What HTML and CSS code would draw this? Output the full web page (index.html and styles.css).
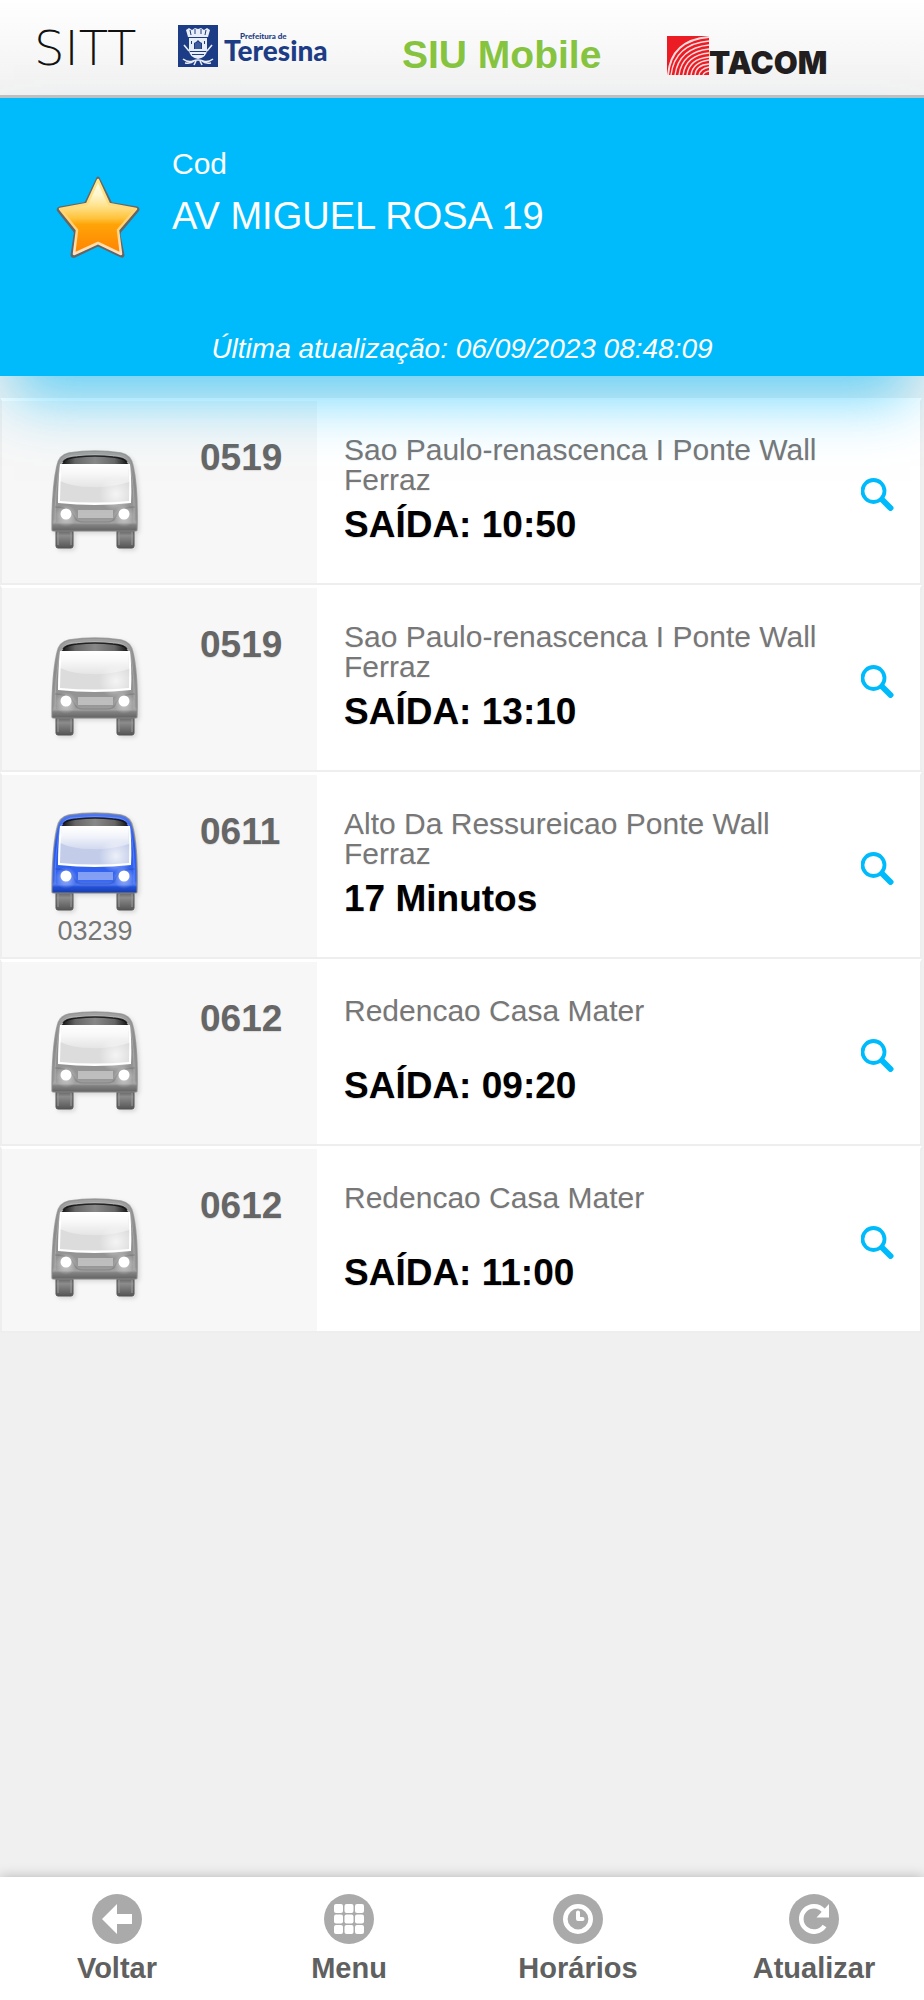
FILE: index.html
```html
<!DOCTYPE html>
<html lang="pt-BR">
<head>
<meta charset="utf-8">
<meta name="viewport" content="width=device-width, initial-scale=1">
<title>SIU Mobile</title>
<link rel="stylesheet" href="styles.css">
</head>
<body>
<svg class="defs" aria-hidden="true">
  <defs>
    <linearGradient id="roof" x1="0" y1="0" x2="1" y2="0">
      <stop offset="0" stop-color="#111"/><stop offset=".2" stop-color="#666"/><stop offset=".5" stop-color="#888"/><stop offset=".8" stop-color="#666"/><stop offset="1" stop-color="#111"/>
    </linearGradient>
    <linearGradient id="shade" x1="0" y1="0" x2="0" y2="1">
      <stop offset="0" stop-color="#fff" stop-opacity=".2"/><stop offset=".4" stop-color="#fff" stop-opacity="0"/>
      <stop offset=".85" stop-color="#fff" stop-opacity=".1"/><stop offset=".9" stop-color="#fff" stop-opacity=".2"/>
      <stop offset=".93" stop-color="#000" stop-opacity=".1"/><stop offset="1" stop-color="#000" stop-opacity=".3"/>
    </linearGradient>
    <linearGradient id="glass" x1="0" y1="0" x2="0" y2="1">
      <stop offset="0" stop-color="#fff"/><stop offset=".4" stop-color="#fff" stop-opacity=".8"/><stop offset="1" stop-color="#fff" stop-opacity=".25"/>
    </linearGradient>
    <radialGradient id="glow">
      <stop offset="0" stop-color="#fff" stop-opacity=".7"/><stop offset="1" stop-color="#fff" stop-opacity="0"/>
    </radialGradient>
    <linearGradient id="tyre" x1="0" y1="0" x2="0" y2="1">
      <stop offset="0" stop-color="#555"/><stop offset=".35" stop-color="#8c8c8c"/><stop offset="1" stop-color="#555"/>
    </linearGradient>
    <linearGradient id="gold" x1="0" y1="0" x2="0" y2="1">
      <stop offset="0" stop-color="#fffdf0"/><stop offset=".2" stop-color="#fff6cc"/><stop offset=".35" stop-color="#ffe28c"/>
      <stop offset=".52" stop-color="#ffc23a"/><stop offset=".6" stop-color="#ffa408"/><stop offset="1" stop-color="#ff8200"/>
    </linearGradient>
    <linearGradient id="rim" x1="0" y1="0" x2="0" y2="1">
      <stop offset="0" stop-color="#ffe98c"/><stop offset=".6" stop-color="#ffd070"/><stop offset="1" stop-color="#ffe2c4"/>
    </linearGradient>
    <symbol id="bus" viewBox="0 0 88 100">
      <g fill="url(#tyre)" stroke="#555" stroke-width="1">
        <rect x="5" y="79" width="17" height="19" rx="2"/><rect x="66" y="79" width="17" height="19" rx="2"/>
      </g>
      <path d="M7 82v13M20 82v13M68 82v13M81 82v13" stroke="#999" stroke-width="1"/>
      <path class="bus-body" d="M1 80Q1 38 6 16Q8 5 18 3Q44-1 70 3Q80 5 82 16Q87 38 86 80Q86 81 84 81H3Q1 81 1 80Z"/>
      <path fill="url(#shade)" stroke="#888" stroke-opacity=".7" stroke-width="1.500" d="M1 80Q1 38 6 16Q8 5 18 3Q44-1 70 3Q80 5 82 16Q87 38 86 80Q86 81 84 81H3Q1 81 1 80Z"/>
      <path d="M4 72Q4 38 9 17Q11 8 20 6Q44 3 68 6Q77 8 79 17Q84 38 83 72" fill="none" stroke="#fff" stroke-opacity=".2" stroke-width="1"/>
      <path fill="url(#roof)" d="M11 14Q13 8 26 7Q44 5 62 7Q75 8 77 14Z"/>
      <path fill="none" stroke="#000" stroke-opacity=".75" stroke-width="1.500" d="M12 12Q14 8 26 7Q44 5 62 7Q74 8 76 12"/>
      <path fill="#fff" d="M9 14H79Q81 32 80 53Q44 57 7 53Q7 32 9 14Z"/>
      <path class="bus-glass" d="M11 15H77Q79 33 78 51Q44 54 9 51Q9 33 11 15Z"/>
      <path fill="url(#glass)" d="M11 15H77L78 32Q60 38 40 37Q22 37 9 31Z"/>
      <circle cx="65" cy="44" r="17" fill="url(#glow)"/>
      <path d="M4 57Q20 57 24 68Q26 72 32 72H56Q62 72 64 68Q68 57 84 57" fill="none" stroke="#000" stroke-opacity=".12" stroke-width="1.500"/>
      <circle cx="15" cy="66" r="11" fill="url(#glow)" opacity=".8"/><circle cx="73" cy="66" r="11" fill="url(#glow)" opacity=".8"/>
      <circle cx="15" cy="64" r="5.500" fill="#fff"/><circle cx="73" cy="64" r="5.500" fill="#fff"/>
      <rect x="27" y="60" width="35" height="8" fill="#fff" fill-opacity=".38"/>
    </symbol>
    <symbol id="search" viewBox="0 0 33 33">
      <circle cx="12.500" cy="13" r="11" fill="none" stroke="currentColor" stroke-width="3.800"/>
      <path d="M21 21.500L29.500 30" fill="none" stroke="currentColor" stroke-width="6" stroke-linecap="round"/>
    </symbol>
  </defs>
</svg>

<header class="topbar">
  <span class="sitt">SITT</span>
  <div class="city">
    <svg class="crest" viewBox="0 0 40 42" aria-hidden="true">
      <rect width="40" height="42" fill="#1d3c86"/>
      <path fill="#e9edf5" d="M8 5l3-2 3 2 3-2 3 1 3-1 3 2 3-2 3 2-2 7H10z"/>
      <path d="M12 5l1 5M17 4v5M23 4v5M28 5l-1 5" stroke="#1d3c86"/>
      <path fill="#e9edf5" d="M11 13h18v12q0 7-9 9q-9-2-9-9z"/>
      <path fill="#1d3c86" d="M16 24v-6l2-1 2-2 2 2 2 1v6zM13 16h1v3h-1zM26 16h1v3h-1zM12 26h16v1H12zM14 29h12v1H14z"/>
      <path d="M18 18v6M20 17v7M22 18v6" stroke="#8fa1c9" stroke-width=".6"/>
      <path d="M6 20l5 6M34 20l-5 6M5 34q5 4 10 2t10 0t10-2M7 38q6 1 9-2M33 38q-6 1-9-2M18 36l-2 4M22 36l2 4" fill="none" stroke="#e9edf5" stroke-width="1.600"/>
    </svg>
    <div class="city-name"><span class="city-small">Prefeitura de</span><span class="city-big">Teresina</span></div>
  </div>
  <h1 class="title">SIU Mobile</h1>
  <div class="tacom">
    <svg class="tacom-mark" viewBox="0 0 42 39" aria-hidden="true">
      <rect width="42" height="39" fill="#ec1c24"/>
      <g fill="none" stroke="#fff" stroke-opacity=".85" stroke-width="1.400">
        <path stroke-width="2" d="M1 39Q4 4 42 1"/><path d="M4 39Q8 8 42 5"/><path d="M8 39Q12 12 42 9"/><path d="M12 39Q15 16 42 13"/>
        <path d="M16 39Q19 19 42 17"/><path d="M20 39Q22 23 42 21"/><path d="M24 39Q26 26 42 24"/><path d="M28 39Q29 29 42 28"/>
        <path d="M32 39Q33 33 42 31"/><path d="M36 39Q37 36 42 35"/>
      </g>
    </svg>
    <span class="tacom-name">TACOM</span>
  </div>
</header>

<section class="stop">
  <div class="stop-main">
    <svg class="star" viewBox="0 0 84 82" role="img" aria-label="Favorito">
      <path d="M42 2L54 26Q54 28 57 28L81 32Q83 33 81 35L65 54Q63 56 63 59L67 79Q67 81 65 80L42 69L19 80Q16 81 16 79L19 59Q20 56 18 54L3 35Q1 33 4 32L27 28Q30 28 31 25Z" fill="#656565" stroke="#656565" stroke-width="3" stroke-linejoin="round"/>
      <path d="M42 4L53 28L80 33L62 54L65 78L42 67L18 78L21 54L4 33L31 28Z" fill="url(#gold)" stroke="url(#rim)" stroke-width="2.500" stroke-linejoin="round"/>
    </svg>
    <div>
      <p class="stop-code">Cod</p>
      <h2 class="stop-name">AV MIGUEL ROSA 19</h2>
    </div>
  </div>
  <p class="updated">Última atualização: 06/09/2023 08:48:09</p>
</section>

<main>
  <ul class="lines">
    <li class="line">
      <div class="vehicle"><svg class="bus"><use href="#bus"/></svg></div>
      <strong class="number">0519</strong>
      <div class="info"><p class="route">Sao Paulo-renascenca I Ponte Wall Ferraz</p><p class="time">SAÍDA: 10:50</p></div>
      <button class="lookup" type="button" aria-label="Consultar linha 0519"><svg><use href="#search"/></svg></button>
    </li>
    <li class="line">
      <div class="vehicle"><svg class="bus"><use href="#bus"/></svg></div>
      <strong class="number">0519</strong>
      <div class="info"><p class="route">Sao Paulo-renascenca I Ponte Wall Ferraz</p><p class="time">SAÍDA: 13:10</p></div>
      <button class="lookup" type="button" aria-label="Consultar linha 0519"><svg><use href="#search"/></svg></button>
    </li>
    <li class="line">
      <div class="vehicle vehicle-live"><svg class="bus"><use href="#bus"/></svg><span class="fleet">03239</span></div>
      <strong class="number">0611</strong>
      <div class="info"><p class="route">Alto Da Ressureicao Ponte Wall Ferraz</p><p class="time">17 Minutos</p></div>
      <button class="lookup" type="button" aria-label="Consultar linha 0611"><svg><use href="#search"/></svg></button>
    </li>
    <li class="line">
      <div class="vehicle"><svg class="bus"><use href="#bus"/></svg></div>
      <strong class="number">0612</strong>
      <div class="info"><p class="route">Redencao Casa Mater</p><p class="time">SAÍDA: 09:20</p></div>
      <button class="lookup" type="button" aria-label="Consultar linha 0612"><svg><use href="#search"/></svg></button>
    </li>
    <li class="line">
      <div class="vehicle"><svg class="bus"><use href="#bus"/></svg></div>
      <strong class="number">0612</strong>
      <div class="info"><p class="route">Redencao Casa Mater</p><p class="time">SAÍDA: 11:00</p></div>
      <button class="lookup" type="button" aria-label="Consultar linha 0612"><svg><use href="#search"/></svg></button>
    </li>
  </ul>
</main>

<nav class="tabs">
  <a class="tab" href="#voltar">
    <svg viewBox="0 0 50 50" aria-hidden="true"><circle cx="25" cy="25" r="25" fill="#aaa"/><path fill="#fff" d="M10 25L25 10V20H40V30H25V40Z"/></svg>
    Voltar</a>
  <a class="tab" href="#menu">
    <svg viewBox="0 0 50 50" aria-hidden="true"><circle cx="25" cy="25" r="25" fill="#aaa"/>
      <g fill="#fff"><rect x="10" y="10" width="9" height="9" rx="2"/><rect x="20.500" y="10" width="9" height="9" rx="2"/><rect x="31" y="10" width="9" height="9" rx="2"/><rect x="10" y="20.500" width="9" height="9" rx="2"/><rect x="20.500" y="20.500" width="9" height="9" rx="2"/><rect x="31" y="20.500" width="9" height="9" rx="2"/><rect x="10" y="31" width="9" height="9" rx="2"/><rect x="20.500" y="31" width="9" height="9" rx="2"/><rect x="31" y="31" width="9" height="9" rx="2"/></g></svg>
    Menu</a>
  <a class="tab" href="#horarios">
    <svg viewBox="0 0 50 50" aria-hidden="true"><circle cx="25" cy="25" r="25" fill="#aaa"/><circle cx="25" cy="25" r="12.700" fill="none" stroke="#fff" stroke-width="4.600"/><path d="M25 18.500V25H29.500" fill="none" stroke="#fff" stroke-width="4" stroke-linecap="round" stroke-linejoin="round"/></svg>
    Horários</a>
  <a class="tab" href="#atualizar">
    <svg viewBox="0 0 50 50" aria-hidden="true"><circle cx="25" cy="25" r="25" fill="#aaa"/><path d="M34.500 16.500A12.700 12.700 0 1 0 35.500 32" fill="none" stroke="#fff" stroke-width="4.600"/><path fill="#fff" d="M40 10V23.500H27.500Z"/></svg>
    Atualizar</a>
</nav>
</body>
</html>
```
FILE: styles.css
```css
* { box-sizing: border-box; }

body {
  margin: 0;
  min-height: 100vh;
  display: flex;
  flex-direction: column;
  background: #f0f0f0;
  font-family: "Liberation Sans", Arial, sans-serif;
  color: #666;
}

p, h1, h2, ul { margin: 0; padding: 0; }
svg { display: block; }
.defs { width: 0; height: 0; position: absolute; }

.topbar {
  display: grid;
  grid-template-columns: 142fr 225fr 299fr 258fr;
  align-items: start;
  height: 98px;
  border-bottom: 3px solid #c0c0c0;
  background: linear-gradient(#fff, #f1f1f1);
}

.sitt {
  padding: 23px 0 0 34px;
  font: 200 48px/50px "DejaVu Sans", sans-serif;
  color: #111;
}

.city { display: flex; gap: 6px; padding: 25px 0 0 36px; }
.crest { width: 40px; height: 42px; flex: none; }
.city-name {
  display: flex;
  flex-direction: column;
  padding-top: 7px;
  color: #1d3c86;
  font-family: Lato, sans-serif;
  font-weight: 900;
}
.city-small { padding-left: 16px; font-size: 8px; line-height: 8px; white-space: nowrap; }
.city-big { font-size: 28px; line-height: 20px; }

.title {
  padding: 33px 0 0 35px;
  font-size: 39px;
  line-height: 44px;
  color: #86c440;
  white-space: nowrap;
}

.tacom { display: flex; padding: 36px 0 0 1px; }
.tacom-mark { width: 42px; height: 39px; flex: none; }
.tacom-name {
  padding-top: 10px;
  font: 900 31px/34px Inter, sans-serif;
  color: #231f20;
}

.stop {
  position: relative;
  z-index: 1;
  padding: 46px 0 9px 56px;
  background: #00bbfb;
  box-shadow: 0 36px 56px -14px rgba(0, 187, 251, .6);
  color: #fff;
}
.stop-main { display: flex; gap: 32px; height: 187px; }
.star { width: 84px; height: 82px; margin-top: 32px; flex: none; }
.stop-code { font-size: 30px; line-height: 40px; }
.stop-name { padding-top: 10px; font-size: 38px; font-weight: 400; line-height: 44px; }
.updated {
  padding-right: 56px;
  font-size: 28px;
  font-style: italic;
  line-height: 36px;
  text-align: center;
}

main { flex: 1; padding: 22px 2px 0 0; }
.lines { list-style: none; }
.line {
  display: grid;
  grid-template-columns: 186px 129px 1fr 72px;
  min-height: 187px;
  border: 2px solid #eee;
  border-top: 3px solid #fff;
  background: linear-gradient(90deg, #f7f7f7 315px, #fff 315px);
}

.vehicle {
  --body: #8c8c8c;
  --glass: #dcdcdc;
  display: flex;
  flex-direction: column;
  align-items: center;
  padding-top: 49px;
}
.vehicle-live {
  --body: #2457ee;
  --glass: #c3cdea;
  padding-top: 37px;
}
.bus {
  width: 88px;
  height: 100px;
  filter: drop-shadow(2px 2px 2px #0002);
}
.bus-body { fill: var(--body); }
.bus-glass { fill: var(--glass); }
.fleet { font-size: 27px; line-height: 38px; color: #777; }

.number { padding: 35px 0 0 12px; font-size: 37px; line-height: 44px; text-shadow: 0 1px 1px #ddd; }
.info { padding: 34px 12px 0 27px; }
.route { min-height: 60px; font-size: 30px; line-height: 30px; color: #777; text-shadow: 0 1px 1px #eee; }
.time {
  padding-top: 9px;
  font-size: 37px;
  font-weight: 700;
  line-height: 42px;
  color: #000;
  text-shadow: 0 1px 1px #ddd;
}

.lookup {
  display: grid;
  place-items: center;
  align-self: center;
  height: 60px;
  padding: 4px 14px 0 0;
  border: 0;
  background: none;
  color: #00bbfb;
}
.lookup svg { width: 33px; height: 33px; }

.tabs {
  display: grid;
  grid-template-columns: 234fr 230fr 228fr 232fr;
  padding: 17px 0 14px;
  background: #fff;
  box-shadow: 0 0 12px rgba(0, 0, 0, .25);
}
.tab {
  display: flex;
  flex-direction: column;
  align-items: center;
  gap: 6px;
  font-size: 29px;
  font-weight: 700;
  line-height: 36px;
  color: #606060;
  text-decoration: none;
}
.tab:last-child { padding-left: 12px; }
.tab svg { width: 50px; height: 50px; }
```
